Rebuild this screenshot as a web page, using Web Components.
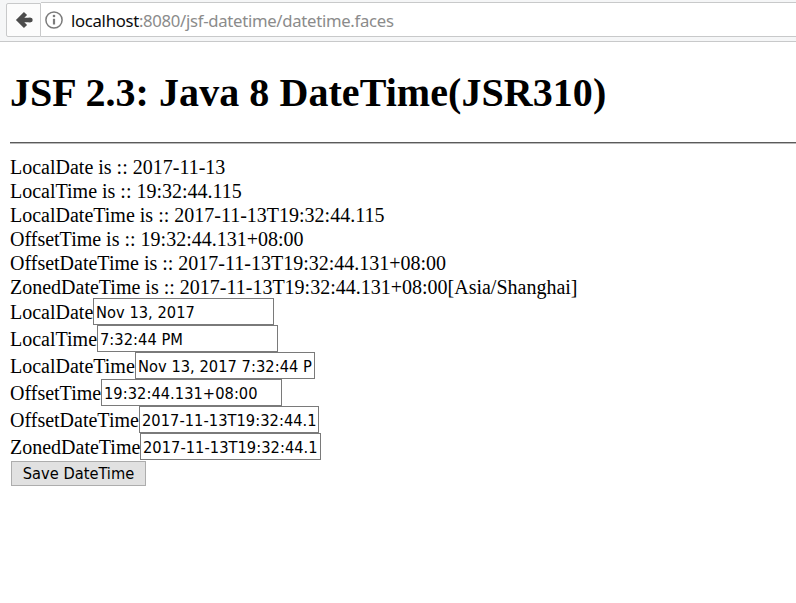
<!DOCTYPE html>
<html lang="en">
<head>
<meta charset="utf-8">
<title>JSF 2.3: Java 8 DateTime(JSR310)</title>
<style>
body { margin: 0; background: #fff; color: #000; font: 20px "Liberation Serif", "Times New Roman", serif; overflow: hidden; }
</style>
</head>
<body>
<browser-bar host="localhost">:8080/jsf-datetime/datetime.faces</browser-bar>
<page-content>
  <page-title slot="title">JSF 2.3: Java 8 DateTime(JSR310)</page-title>
  <output-line>LocalDate is :: 2017-11-13</output-line>
  <output-line>LocalTime is :: 19:32:44.115</output-line>
  <output-line>LocalDateTime is :: 2017-11-13T19:32:44.115</output-line>
  <output-line>OffsetTime is :: 19:32:44.131+08:00</output-line>
  <output-line>OffsetDateTime is :: 2017-11-13T19:32:44.131+08:00</output-line>
  <output-line>ZonedDateTime is :: 2017-11-13T19:32:44.131+08:00[Asia/Shanghai]</output-line>
  <date-field label="LocalDate" style="--w:83px;--f:181px">Nov 13, 2017</date-field>
  <date-field label="LocalTime" style="--w:87px;--f:181px">7:32:44 PM</date-field>
  <date-field label="LocalDateTime" style="--w:125px;--f:180px">Nov 13, 2017 7:32:44 PM</date-field>
  <date-field label="OffsetTime" style="--w:91px;--f:181px">19:32:44.131+08:00</date-field>
  <date-field label="OffsetDateTime" style="--w:129px;--f:180px">2017-11-13T19:32:44.131+08:00</date-field>
  <date-field label="ZonedDateTime" style="--w:130px;--f:181px">2017-11-13T19:32:44.131+08:00[Asia/Shanghai]</date-field>
  <save-button>Save DateTime</save-button>
</page-content>
<script>
const define = (name, html) => customElements.define(name, class extends HTMLElement {
  constructor() {
    super();
    this.attachShadow({ mode: "open" }).innerHTML = html;
    for (const el of this.shadowRoot.querySelectorAll("[data-attr]"))
      el.textContent = this.getAttribute(el.dataset.attr);
  }
});

define("browser-bar", `
<style>
:host { display: flex; box-sizing: border-box; height: 42px; padding: 2px 0 4px 6px; background: #f5f6f7; border-bottom: 1px solid #c8c9ca; }
.back { box-sizing: border-box; width: 35px; height: 34px; margin-top: 1px; background: #fcfcfc; border: 1px solid #c8c9ca; border-radius: 2px 0 0 2px; }
.back svg, .info { display: block; }
.url { box-sizing: border-box; flex: 1; height: 35px; display: flex; align-items: center; background: #fff; border: solid #c8c9ca; border-width: 1px 0; padding-left: 4px; }
.text { margin-left: 8px; font: 16.7px/33px "Noto Sans", "Open Sans", sans-serif; letter-spacing: -.29px; color: #8b8b8b; white-space: nowrap; padding-top: 2px; }
.text b { font-weight: 400; color: #0c0c0d; }
</style>
<div class="back"><svg width="33" height="32" viewBox="0 0 33 32"><path d="M18.500 9.500 12 16l6.500 6.500M13 16h10.500" fill="none" stroke="#4c4c4c" stroke-width="4.400"/><path d="M22 16h1.500" stroke="#4c4c4c" stroke-width="4.400" stroke-linecap="round"/></svg></div>
<div class="url">
<svg class="info" width="18" height="18" viewBox="0 0 18 18"><circle cx="9" cy="9" r="8.100" fill="none" stroke="#7b7b7b" stroke-width="1.500"/><circle cx="9" cy="5" r="1.300" fill="#7b7b7b"/><path d="M9 7.800v5.700" stroke="#7b7b7b" stroke-width="2.200"/></svg>
<span class="text"><b data-attr="host"></b><slot></slot></span></div>`);

define("page-content", `
<style>
:host { display: flex; flex-direction: column; align-items: flex-start; padding-left: 10px; }
hr { align-self: stretch; height: 1px; margin: 0 0 10px; border: 0; background: #5b5b5b; border-bottom: 1px solid #b9b9b9; }
</style>
<slot name="title"></slot><hr><slot></slot>`);

define("page-title", `
<style>
:host { display: block; height: 100px; box-sizing: border-box; padding-top: 28px; }
h1 { margin: 0; font: bold 40px/46px "Liberation Serif", "Times New Roman", serif; letter-spacing: .06px; white-space: nowrap; }
</style>
<h1><slot></slot></h1>`);

define("output-line", `
<style>:host { display: block; height: 24px; line-height: 26px; white-space: nowrap; }</style>
<slot></slot>`);

define("date-field", `
<style>
:host { display: flex; height: 27px; line-height: 29px; white-space: nowrap; }
label { width: var(--w); }
.field { box-sizing: border-box; width: var(--f); height: 27px; border: 1px solid #7a7a7a; padding: 0 2px; }
.value { overflow: hidden; height: 25px; font: 16.300px/27px "DejaVu Sans Condensed", "DejaVu Sans", sans-serif; font-stretch: condensed; letter-spacing: .04px; }
</style>
<label data-attr="label"></label><div class="field"><div class="value"><slot></slot></div></div>`);

define("save-button", `
<style>
:host { display: block; margin: 1px 0 0 1px; }
button { box-sizing: border-box; display: block; width: 135px; height: 25px; padding: 0; border: 1px solid #adadad; border-radius: 0; background: #e1e1e1; color: #000; font: 16.300px/24px "DejaVu Sans Condensed", "DejaVu Sans", sans-serif; font-stretch: condensed; letter-spacing: 0; white-space: nowrap; }
</style>
<button type="button"><slot></slot></button>`);
</script>
</body>
</html>
